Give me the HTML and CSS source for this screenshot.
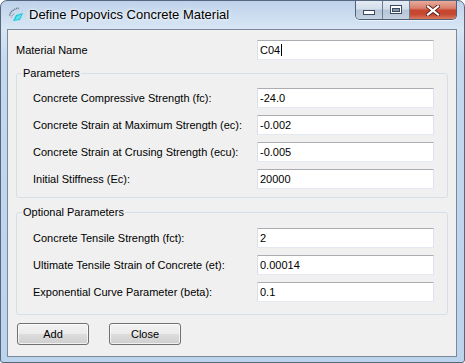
FILE: index.html
```html
<!DOCTYPE html>
<html>
<head>
<meta charset="utf-8">
<link rel="stylesheet" href="styles.css">
</head>
<body>
<div class="window">
  <div class="titlebar">
    <svg class="app-icon" width="16" height="16" viewBox="0 0 16 16">
      <path d="M1.5 9.5 L2.5 7 L4 5 L6 3.5 L8.5 2.5 L11 2.2" fill="none" stroke="#6b7a88" stroke-width="1.6" stroke-dasharray="1.2 0.8"/>
      <path d="M3 11.5 L4.5 9 L6.5 7.2" fill="none" stroke="#8895a2" stroke-width="1.2" stroke-dasharray="1 0.8"/>
      <polygon points="8,9 15,7 12,14 5,15" fill="#19c7d8"/>
      <polygon points="9,10 13.5,8.6 11.4,13 7,14" fill="#5fe3ea"/>
    </svg>
    <span class="title">Define Popovics Concrete Material</span>
    <div class="caption-buttons">
      <div class="cb cb-min">
        <svg width="12" height="6" viewBox="0 0 12 6"><rect x="0.5" y="0.5" width="11" height="4" fill="#fff" stroke="#3b4a5e"/></svg>
      </div>
      <div class="cb cb-max">
        <svg width="12" height="9" viewBox="0 0 12 9"><rect x="0.5" y="0.5" width="11" height="8" fill="#fff" stroke="#3b4a5e"/><rect x="2.5" y="3.5" width="7" height="3" fill="#8596ab" stroke="#3b4a5e"/></svg>
      </div>
      <div class="cb cb-close">
        <svg width="14" height="11" viewBox="0 0 14 11"><path d="M2 1.5 L12 9.5 M12 1.5 L2 9.5" stroke="#5a2218" stroke-width="4" stroke-linecap="square"/><path d="M2 1.5 L12 9.5 M12 1.5 L2 9.5" stroke="#fff" stroke-width="2.2" stroke-linecap="square"/></svg>
      </div>
    </div>
  </div>
  <div class="client">
    <div class="row top-row">
      <span class="label">Material Name</span>
      <div class="input">C04<span class="caret"></span></div>
    </div>
    <fieldset class="group group-main">
      <legend>Parameters</legend>
      <div class="row"><span class="label">Concrete Compressive Strength (fc):</span><div class="input">-24.0</div></div>
      <div class="row"><span class="label">Concrete Strain at Maximum Strength (ec):</span><div class="input">-0.002</div></div>
      <div class="row"><span class="label">Concrete Strain at Crusing Strength (ecu):</span><div class="input">-0.005</div></div>
      <div class="row"><span class="label">Initial Stiffness (Ec):</span><div class="input">20000</div></div>
    </fieldset>
    <fieldset class="group group-opt">
      <legend>Optional Parameters</legend>
      <div class="row"><span class="label">Concrete Tensile Strength (fct):</span><div class="input">2</div></div>
      <div class="row"><span class="label">Ultimate Tensile Strain of Concrete (et):</span><div class="input">0.00014</div></div>
      <div class="row"><span class="label">Exponential Curve Parameter (beta):</span><div class="input">0.1</div></div>
    </fieldset>
    <div class="buttons">
      <button class="btn">Add</button>
      <button class="btn">Close</button>
    </div>
  </div>
</div>
</body>
</html>
```

FILE: styles.css
```css
html, body {
  margin: 0;
  padding: 0;
}
body {
  width: 465px;
  height: 363px;
  overflow: hidden;
  background: #ffffff;
  font-family: "Liberation Sans", Arial, sans-serif;
}
.window {
  box-sizing: border-box;
  width: 465px;
  height: 363px;
  border: 1px solid #55677e;
  border-radius: 7px 7px 3px 3px;
  background: linear-gradient(180deg, #bdd2ea 0px, #cfdff1 18px, #d8e6f4 28px, #c4d8ee 60px, #bcd3ec 100%);
  display: flex;
  flex-direction: column;
  padding: 0 7px 5px 6px;
}
.titlebar {
  height: 28px;
  display: flex;
  align-items: flex-start;
  flex: none;
}
.app-icon {
  margin: 5px 0 0 1px;
  flex: none;
}
.title {
  margin: 6px 0 0 5px;
  font-size: 13px;
  line-height: 16px;
  color: #000;
  text-shadow: 0 0 6px rgba(255,255,255,0.9), 0 0 3px rgba(255,255,255,0.9);
  white-space: nowrap;
}
.caption-buttons {
  margin-left: auto;
  display: flex;
  height: 19px;
  box-sizing: border-box;
  border: 1px solid #4e5f77;
  border-top: none;
  border-radius: 0 0 5px 5px;
  overflow: hidden;
  box-shadow: 0 1px 0 rgba(255,255,255,0.6);
}
.cb {
  display: flex;
  align-items: center;
  justify-content: center;
  height: 18px;
  box-sizing: border-box;
}
.cb-min {
  width: 27px;
  border-right: 1px solid #6c7d93;
  background: linear-gradient(180deg, #e4ebf4 0%, #d3deea 45%, #b6c5d7 50%, #c3d1e1 100%);
  padding-top: 5px;
}
.cb-max {
  width: 27px;
  border-right: 1px solid #6c7d93;
  background: linear-gradient(180deg, #e4ebf4 0%, #d3deea 45%, #b6c5d7 50%, #c3d1e1 100%);
  padding-bottom: 1px;
}
.cb-close {
  width: 46px;
  background: linear-gradient(180deg, #e8aa9c 0%, #d9806c 40%, #c7452f 52%, #c44a32 75%, #dc7a5e 100%);
}
.client {
  flex: 1;
  box-sizing: border-box;
  background: #f0f0f0;
  border: 1px solid #7b889a;
  padding: 10px 8px 0 8px;
  display: flex;
  flex-direction: column;
  font-size: 11px;
  color: #000;
}
.row {
  display: flex;
  align-items: center;
  justify-content: space-between;
  height: 20px;
}
.row + .row {
  margin-top: 7px;
}
.top-row {
  padding-right: 14px;
}
.label {
  white-space: nowrap;
  line-height: 13px;
}
.input {
  box-sizing: border-box;
  width: 177px;
  height: 20px;
  background: #fff;
  border: 1px solid;
  border-color: #abadb3 #e2e3ea #e3e9ef #dbdfe6;
  border-radius: 1px;
  padding: 0 2px;
  line-height: 18px;
  display: flex;
  align-items: center;
}
.caret {
  display: inline-block;
  width: 1px;
  height: 12px;
  background: #000;
  margin-left: 1px;
}
.group {
  margin: 0;
  border: 1px solid #d5dfe5;
  border-radius: 3px;
  min-width: 0;
}
.group legend {
  padding: 0 1px;
  font-size: 11px;
  line-height: 14px;
}
.group .row {
  padding-left: 11px;
}
.group-main {
  margin-top: 6px;
  padding: 8px 13px 8px 5px;
}
.group-opt {
  margin-top: 7px;
  padding: 9px 13px 12px 5px;
}
.buttons {
  display: flex;
  gap: 20px;
  margin: 8px 0 0 1px;
}
.btn {
  width: 72px;
  height: 22px;
  box-sizing: border-box;
  border: 1px solid #707070;
  border-radius: 3px;
  background: linear-gradient(180deg, #f2f2f2 0%, #ebebeb 50%, #dddddd 50%, #cfcfcf 100%);
  box-shadow: inset 0 0 0 1px rgba(255,255,255,0.7);
  font-family: "Liberation Sans", Arial, sans-serif;
  font-size: 11px;
  color: #000;
  padding: 0;
}
```
